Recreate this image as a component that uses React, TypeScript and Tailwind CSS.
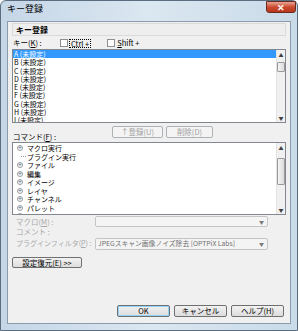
import React from "react";

const font = { fontFamily: '"Noto Sans CJK JP", "Noto Sans", sans-serif' };

const keys = ["A", "B", "C", "D", "E", "F", "G", "H", "I", "J"];
const commands = [
  { label: "マクロ実行", plus: true },
  { label: "プラグイン実行", plus: false },
  { label: "ファイル", plus: true },
  { label: "編集", plus: true },
  { label: "イメージ", plus: true },
  { label: "レイヤ", plus: true },
  { label: "チャンネル", plus: true },
  { label: "パレット", plus: true },
  { label: "ツール", plus: true },
];

function Scrollbar({ thumbTop, thumbH }: { thumbTop: string; thumbH: string }) {
  return (
    <div className="flex w-[9px] shrink-0 flex-col border-l border-[#e3e3e3] bg-[#f0f0f0]">
      <div className="flex h-[9px] items-center justify-center text-[5px] leading-none text-[#404040]">▲</div>
      <div className="relative flex-1">
        <div
          className={`absolute left-0 right-0 rounded-[1px] border border-[#9a9a9a] bg-gradient-to-r from-[#f4f4f4] to-[#dcdcdc] ${thumbTop} ${thumbH}`}
        />
      </div>
      <div className="flex h-[9px] items-center justify-center text-[5px] leading-none text-[#404040]">▼</div>
    </div>
  );
}

function Btn({ children, className = "", disabled = false }: { children: React.ReactNode; className?: string; disabled?: boolean }) {
  return (
    <div
      className={`flex items-center justify-center whitespace-nowrap rounded-[2px] border bg-gradient-to-b text-[7.5px] leading-none ${
        disabled ? "border-[#adb2b5] from-[#f4f4f4] to-[#f4f4f4] text-[#a0a0a0]" : "border-[#707070] from-[#f2f2f2] to-[#dddddd] text-black"
      } ${className}`}
    >
      {children}
    </div>
  );
}

export default function App() {
  return (
    <div className="h-[331px] w-[300px] overflow-hidden bg-white" style={font}>
      <div className="flex h-[331px] w-[298px] flex-col rounded-t-[6px] border border-[#5b6d80] bg-gradient-to-r from-[#c5d6e7] via-[#dbe7f1] to-[#c9dbe8]">
        {/* title bar */}
        <div className="flex h-[20px] shrink-0 items-start justify-between pl-[6px]">
          <span className="mt-[3px] text-[9px] leading-[10px] text-black">キー登録</span>
          <div className="mr-[1px] flex h-[12px] w-[30px] items-center justify-center rounded-b-[3px] border border-[#6b2a1e] bg-gradient-to-b from-[#e8a394] via-[#cc4b30] to-[#b8381d] text-[9px] font-bold leading-none text-white">
            ✕
          </div>
        </div>

        {/* client area */}
        <div className="mx-[6px] flex h-[303px] flex-col border border-[#8a9bad] bg-[#f0f0f0] px-[4px] text-[7.5px] leading-none text-black">
          <div className="mt-[1px] flex h-[13px] items-center border border-[#dadada] bg-[#eeeeee] pl-[3px] text-[8px] font-bold">
            キー登録
          </div>

          <div className="mt-[2px] flex h-[10px] items-center whitespace-nowrap">
            <span className="w-[48px] pl-[1px]">キー(<u>K</u>) :</span>
            <span className="flex items-center">
              <span className="mr-[1px] h-[8px] w-[8px] border border-[#8f8f8f] bg-white" />
              <span className="border border-dotted border-black px-[1px] leading-[7px]">Ctrl +</span>
            </span>
            <span className="ml-[16px] flex items-center">
              <span className="mr-[1px] h-[8px] w-[8px] border border-[#8f8f8f] bg-white" />
              <span className="px-[1px]"><u>S</u>hift +</span>
            </span>
          </div>

          <div className="mt-[1px] flex h-[74px] border border-[#828790] bg-white">
            <div className="flex-1 overflow-hidden">
              {keys.map((k, i) => (
                <div
                  key={k}
                  className={`h-[8.3px] whitespace-nowrap pl-[1px] text-[7px] leading-[8.3px] ${i === 0 ? "bg-[#3399ff] text-white" : ""}`}
                >
                  {k} (未設定)
                </div>
              ))}
            </div>
            <Scrollbar thumbTop="top-[3px]" thumbH="h-[10px]" />
          </div>

          <div className="mt-[3px] flex h-[12px] items-center">
            <span className="mt-[9px] w-[100px] whitespace-nowrap pl-[1px]">コマンド(<u>F</u>) :</span>
            <Btn disabled className="h-[12px] w-[51px]">↑登録(U)</Btn>
            <Btn disabled className="ml-[3px] h-[12px] w-[47px]">削除(D)</Btn>
          </div>

          <div className="mt-[4px] flex h-[73px] border border-[#828790] bg-white">
            <div className="flex-1 overflow-hidden pt-[1px]">
              {commands.map((c) => (
                <div key={c.label} className="flex h-[8.5px] items-center whitespace-nowrap text-[7px] leading-[8px]">
                  <span className="flex w-[14px] items-center justify-center">
                    {c.plus ? (
                      <span className="flex h-[6px] w-[6px] items-center justify-center rounded-full border border-[#9a9a9a] text-[6px] leading-none text-[#3a5a8a]">
                        +
                      </span>
                    ) : (
                      <span className="ml-[6px] h-[1px] w-[5px] border-t border-dotted border-[#9a9a9a]" />
                    )}
                  </span>
                  <span>{c.label}</span>
                </div>
              ))}
            </div>
            <Scrollbar thumbTop="top-[6px]" thumbH="h-[27px]" />
          </div>

          <div className="mt-[1px] flex flex-col whitespace-nowrap text-[#a8a8a8]">
            <div className="flex h-[11px] items-center">
              <span className="w-[83px] pl-[4px]">マクロ(<u>M</u>) :</span>
              <div className="flex h-[11px] w-[173px] items-center justify-end rounded-[2px] border border-[#c5c5c5] bg-[#f4f4f4] pr-[3px] text-[5px] text-[#7a7a7a]">▼</div>
            </div>
            <div className="flex h-[10px] items-center pl-[4px]">コメント :</div>
            <div className="flex h-[13px] items-center">
              <span className="w-[83px] pl-[4px] text-[7px]">プラグインフィルタ(<u>P</u>) :</span>
              <div className="flex h-[12px] w-[173px] items-center justify-between rounded-[2px] border border-[#c5c5c5] bg-[#f4f4f4] pl-[2px] pr-[3px] text-[#707070]">
                <span className="text-[6.8px]">JPEGスキャン画像ノイズ除去 [OPTPiX Labs]</span>
                <span className="text-[5px] text-[#7a7a7a]">▼</span>
              </div>
            </div>
          </div>

          <Btn className="mt-[7px] h-[11px] w-[70px]">設定復元(E) &gt;&gt;</Btn>

          <div className="mt-auto mb-[6px] flex justify-end pr-[2px]">
            <Btn className="h-[12px] w-[53px] border-[#3c7fb1] from-[#eaf6fd] to-[#bee6fd] shadow-[inset_0_0_0_1px_#8fd3f7]">OK</Btn>
            <Btn className="ml-[4px] h-[12px] w-[53px]">キャンセル</Btn>
            <Btn className="ml-[4px] h-[12px] w-[53px]">ヘルプ(H)</Btn>
          </div>
        </div>
      </div>
    </div>
  );
}
